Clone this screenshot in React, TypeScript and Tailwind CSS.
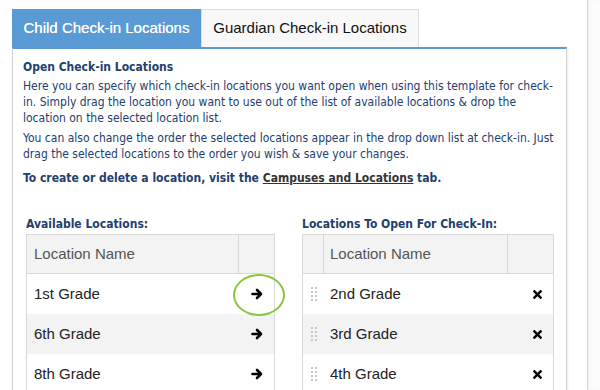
import { FaTimes } from 'react-icons/fa';

const available = ['1st Grade', '6th Grade', '8th Grade'];
const selected = ['2nd Grade', '3rd Grade', '4th Grade'];

function DragHandle() {
  return (
    <svg width="6" height="14" viewBox="0 0 6 14" className="text-[#c8c8c8]">
      {[0, 1, 2, 3].map((r) =>
        [0, 1].map((c) => <rect key={`${r}-${c}`} x={c * 4} y={r * 4} width="2" height="2" fill="currentColor" />)
      )}
    </svg>
  );
}

function BoldArrow() {
  return (
    <svg width="12" height="12" viewBox="0 0 12 12" fill="none" stroke="#000" strokeWidth="2.6" strokeLinecap="round" strokeLinejoin="round">
      <path d="M1.5 6h8" />
      <path d="M6 2l4 4-4 4" />
    </svg>
  );
}

export default function App() {
  return (
    <div className="w-[600px] h-[390px] overflow-hidden bg-white flex font-['Liberation_Sans',Arial,sans-serif]">
      <div className="w-[587px] shrink-0 pl-3 pt-[9px]">
        {/* tabs */}
        <div className="flex items-start">
          <div className="w-[189px] h-[38px] bg-[#5b9bd5] text-white text-[15px] flex items-center justify-center [text-shadow:0_0_0.4px_#fff]">Child Check-in Locations</div>
          <div className="w-[218px] h-[38px] bg-[#f8f8f8] border border-b-0 border-[#dcdcdc] text-[#111] text-[15px] flex items-center justify-center">Guardian Check-in Locations</div>
        </div>

        <div className="w-[555px] h-[400px] border-t-2 border-t-[#5b9bd5] border-x border-x-[#d2d2d2] shadow-[1px_0_2px_rgba(0,0,0,0.08)] pl-[10px] pr-[10px] pt-[10px]">
          <div className="font-['DejaVu_Sans_Condensed','DejaVu_Sans',sans-serif] text-[12px] leading-[16px] text-[#22406d]">
            <div className="font-bold mb-[3px]">Open Check-in Locations</div>
            <p className="mb-[4px]">
              Here you can specify which check-in locations you want open when using this template for check-<br />
              in. Simply drag the location you want to use out of the list of available locations &amp; drop the<br />
              location on the selected location list.
            </p>
            <p className="mb-[8px]">
              You can also change the order the selected locations appear in the drop down list at check-in. Just<br />
              drag the selected locations to the order you wish &amp; save your changes.
            </p>
            <p className="font-bold">
              To create or delete a location, visit the <span className="underline text-[#333]">Campuses and Locations</span> tab.
            </p>
          </div>

          <div className="flex gap-[27px] pl-[3px] mt-[30px]">
            {/* available */}
            <div className="w-[249px]">
              <div className="font-['DejaVu_Sans_Condensed','DejaVu_Sans',sans-serif] font-bold text-[12px] leading-[16px] text-[#22406d] mb-[2px]">Available Locations:</div>
              <div className="border border-[#d8d8d8] border-b-0">
                <div className="flex h-[39px] bg-[#f3f3f3] border-b border-[#d8d8d8] text-[15px] text-[#555]">
                  <div className="flex-1 flex items-center pl-[7px] border-r border-[#d8d8d8]">Location Name</div>
                  <div className="w-[35px]" />
                </div>
                {available.map((name, i) => (
                  <div key={name} className={`flex h-[40px] text-[15px] text-[#222] ${i % 2 ? 'bg-[#f3f3f3]' : 'bg-white'}`}>
                    <div className="flex-1 flex items-center pl-[7px]">{name}</div>
                    <div className="relative w-[35px] flex items-center justify-center">
                      <BoldArrow />
                      {i === 0 && <div className="absolute left-[-6px] top-0 w-[52px] h-[42px] rounded-[50%] border-2 border-[#8cc43e]" />}
                    </div>
                  </div>
                ))}
              </div>
            </div>

            {/* selected */}
            <div className="w-[252px]">
              <div className="font-['DejaVu_Sans_Condensed','DejaVu_Sans',sans-serif] font-bold text-[12px] leading-[16px] text-[#22406d] mb-[2px]">Locations To Open For Check-In:</div>
              <div className="border border-[#d8d8d8] border-b-0">
                <div className="flex h-[39px] bg-[#f3f3f3] border-b border-[#d8d8d8] text-[15px] text-[#555]">
                  <div className="w-[21px] border-r border-[#d8d8d8]" />
                  <div className="flex-1 flex items-center pl-[6px] border-r border-[#d8d8d8]">Location Name</div>
                  <div className="w-[45px]" />
                </div>
                {selected.map((name, i) => (
                  <div key={name} className={`flex h-[40px] text-[15px] text-[#222] ${i % 2 ? 'bg-[#f3f3f3]' : 'bg-white'}`}>
                    <div className="w-[22px] flex items-center justify-center">
                      <DragHandle />
                    </div>
                    <div className="flex-1 flex items-center pl-[5px]">{name}</div>
                    <div className="w-[45px] flex items-center justify-end pr-[9px]">
                      <FaTimes className="w-[13px] h-[13px] text-black" />
                    </div>
                  </div>
                ))}
              </div>
            </div>
          </div>
        </div>
      </div>
      <div className="flex-1 border-l border-[#d6d6d6] bg-[#fcfcfc] shadow-[inset_1px_0_2px_rgba(0,0,0,0.05)]" />
    </div>
  );
}
